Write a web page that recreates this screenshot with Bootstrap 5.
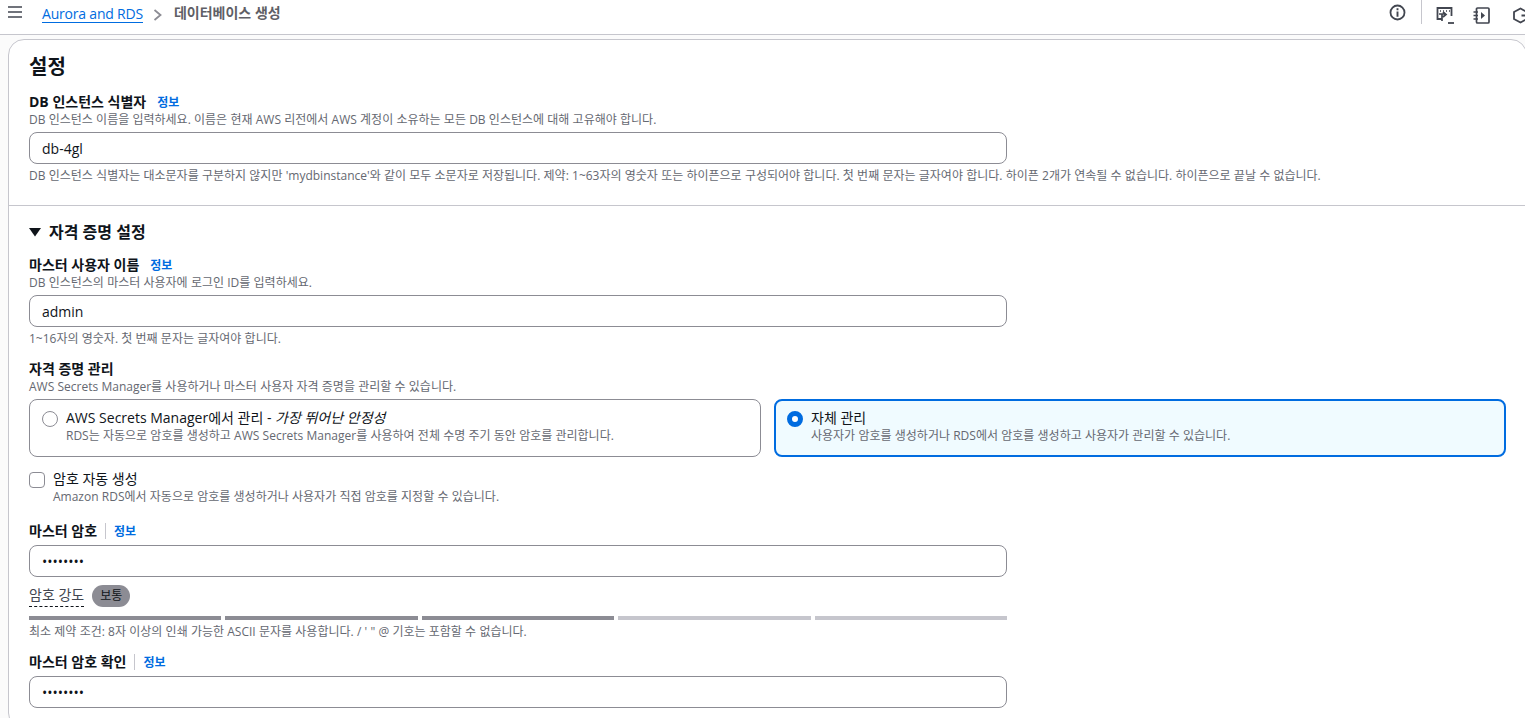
<!DOCTYPE html>
<html lang="ko">
<head>
<meta charset="utf-8">
<title>데이터베이스 생성</title>
<link rel="stylesheet" href="https://cdn.jsdelivr.net/npm/bootstrap@5.3.0/dist/css/bootstrap.min.css">
<style>
html,body{height:718px;overflow:hidden;background:#fbfbfb}
body{font-family:"Open Sans","Noto Sans CJK KR",sans-serif;font-size:14px;line-height:20px;color:#0f141a}
.topbar{height:35px;border-bottom:1px solid #c6c6cd;padding:0 0 0 8px;background:#fff}
.crumb-link{color:#006ce0;text-decoration:none;border-bottom:1px solid #006ce0;line-height:17px;margin:5px 0 0 20px;letter-spacing:-.2px}
.crumb-sep{margin:9px 12px 0 10px}
.crumb-now{font-weight:700;font-size:14px;color:#5f5f66;margin-top:3px;line-height:20px}
.top-icons{margin-left:auto;width:136px;overflow:hidden;height:26px;margin-top:-1px}
.top-div{width:1px;height:24px;background:#c6c6cd;margin:1px 14px 0 15px;flex:none}
.panel{margin:4px 0 0 8px;border:1px solid #c6c6cd;border-radius:16px;height:690px;padding:13px 0 0;width:1519px;background:#fff}
.sect{padding:0 20px}
.sec-title{font-size:20px;line-height:28px;font-weight:700;margin:0 0 11px}
.f-label{font-size:14px;font-weight:700;line-height:20px;height:20px}
.f-desc{font-size:12px;line-height:16px;color:#656871;word-spacing:.12px}
.f-info{color:#006ce0;font-size:12px;font-weight:700;text-decoration:none;margin-left:11px}
.info-div{border-left:1px solid #c6c6cd;padding-left:8px;margin-left:8px;height:16px;display:inline-block;line-height:16px}
.info-div a{color:#006ce0;font-size:12px;font-weight:700;text-decoration:none}
.f-input.form-control{width:978px;height:32px;border:1px solid #8c8c94;border-radius:8px;padding:4px 12px;font-size:14px;line-height:20px;color:#0f141a;font-family:inherit}
.sep-line{border-top:1px solid #c6c6cd;margin:0;opacity:1;width:100%}
.exp-title{font-size:16px;font-weight:700;line-height:20px;display:flex;align-items:center;gap:8px;margin:16px 0 13px}
.tile-row{display:flex;gap:13px;width:1477px}
.tile{flex:1 1 0;height:58px;border:1px solid #8c8c94;border-radius:8px;padding:5px 12px;display:flex;gap:8px;min-width:0}
.tile-on{border:2px solid #006ce0;background:#f0fbff;padding:4px 11px}
.radio-mark{flex:none;width:16px;height:16px;border-radius:50%;border:1px solid #8c8c94;margin-top:6px;background:#fff}
.radio-on{border:5px solid #006ce0}
.tile-title{line-height:20px;margin-top:3px}
.check-box{flex:none;width:16px;height:16px;border:1px solid #8c8c94;border-radius:4px;margin-top:0}
.strength{display:inline-block;border-bottom:1px dashed #0f141a;line-height:20px;height:22px;font-size:14px;color:#424650}
.pill{background:#8c8c94;color:#0f141a;border-radius:11px;font-size:12px;line-height:22px;height:22px;padding:0 8px;display:inline-block}
.meter{display:flex;gap:4px;width:978px;height:4px}
.meter i{flex:1 1 0;background:#8c8c94;display:block}
.meter i.off{background:#c6c6cd}
</style>
</head>
<body>
<div class="topbar d-flex align-items-start">
  <svg width="14" height="12" viewBox="0 0 14 12" style="margin-top:6px;flex:none"><path d="M0 1h14M0 6h14M0 11h14" stroke="#424650" stroke-width="1.6"/></svg>
  <a class="crumb-link" href="#">Aurora and RDS</a>
  <svg class="crumb-sep" width="9" height="12" viewBox="0 0 9 12"><path d="M1.500 1l6 5-6 5" fill="none" stroke="#8c8c94" stroke-width="1.8"/></svg>
  <span class="crumb-now">데이터베이스 생성</span>
  <div class="top-icons d-flex align-items-start">
    <svg width="17" height="17" viewBox="0 0 16 16" style="margin-top:5px;flex:none"><circle cx="8" cy="8" r="6.600" fill="none" stroke="#424650" stroke-width="1.700"/><path d="M8 7v5M8 4v1.800" stroke="#424650" stroke-width="1.800"/></svg>
    <span class="top-div"></span>
    <svg width="19" height="19" viewBox="0 0 19 19" style="margin-top:7px;flex:none"><path d="M6 13H1.500V2h14v8" fill="none" stroke="#424650" stroke-width="1.800"/><path d="M4 5h1M7 5h1M10 5h1M13 5h1" stroke="#424650" stroke-width="1.600"/><path d="M3 8h6M7 6l3 2.500L7 11M6 8v7" fill="none" stroke="#424650" stroke-width="1.700"/><path d="M12 17h6" stroke="#424650" stroke-width="1.800"/></svg>
    <svg width="17" height="17" viewBox="0 0 17 17" style="margin:8px 0 0 18px;flex:none"><rect x="3.500" y="1" width="12.500" height="15" rx="1" fill="none" stroke="#424650" stroke-width="1.700"/><path d="M0.500 5h4.500M0.500 8.500h4.500M0.500 12h4.500" stroke="#424650" stroke-width="1.500"/><path d="M8 5l4 3.500-4 3.500z" fill="#424650"/></svg>
    <svg width="17" height="17" viewBox="0 0 17 17" style="margin:8px 0 0 22px;flex:none"><path d="M14 4.500 8.500 1.500 2 5v7l6.500 3.500L15 12V8.500H9.500" fill="none" stroke="#424650" stroke-width="1.800"/></svg>
  </div>
</div>
<div class="panel">
  <div class="sect">
    <h2 class="sec-title">설정</h2>
    <div class="f-label">DB 인스턴스 식별자<a class="f-info" href="#">정보</a></div>
    <div class="f-desc">DB 인스턴스 이름을 입력하세요. 이름은 현재 AWS 리전에서 AWS 계정이 소유하는 모든 DB 인스턴스에 대해 고유해야 합니다.</div>
    <input class="form-control f-input" style="margin-top:4px" value="db-4gl">
    <div class="f-desc" style="margin-top:4px">DB 인스턴스 식별자는 대소문자를 구분하지 않지만 'mydbinstance'와 같이 모두 소문자로 저장됩니다. 제약: 1~63자의 영숫자 또는 하이픈으로 구성되어야 합니다. 첫 번째 문자는 글자여야 합니다. 하이픈 2개가 연속될 수 없습니다. 하이픈으로 끝날 수 없습니다.</div>
  </div>
  <hr class="sep-line" style="margin-top:21px">
  <div class="sect">
    <div class="exp-title"><svg width="12" height="10" viewBox="0 0 12 10"><path d="M0 1h12L6 9.500z" fill="#0f141a"/></svg>자격 증명 설정</div>
    <div class="f-label">마스터 사용자 이름<a class="f-info" href="#">정보</a></div>
    <div class="f-desc">DB 인스턴스의 마스터 사용자에 로그인 ID를 입력하세요.</div>
    <input class="form-control f-input" style="margin-top:4px" value="admin">
    <div class="f-desc" style="margin-top:4px">1~16자의 영숫자. 첫 번째 문자는 글자여야 합니다.</div>
    <div class="f-label" style="margin-top:12px">자격 증명 관리</div>
    <div class="f-desc">AWS Secrets Manager를 사용하거나 마스터 사용자 자격 증명을 관리할 수 있습니다.</div>
    <div class="tile-row" style="margin-top:4px">
      <div class="tile"><span class="radio-mark"></span><div><div class="tile-title">AWS Secrets Manager에서 관리 - <em>가장 뛰어난 안정성</em></div><div class="f-desc">RDS는 자동으로 암호를 생성하고 AWS Secrets Manager를 사용하여 전체 수명 주기 동안 암호를 관리합니다.</div></div></div>
      <div class="tile tile-on"><span class="radio-mark radio-on"></span><div><div class="tile-title">자체 관리</div><div class="f-desc">사용자가 암호를 생성하거나 RDS에서 암호를 생성하고 사용자가 관리할 수 있습니다.</div></div></div>
    </div>
    <div class="d-flex gap-2" style="margin-top:15px">
      <span class="check-box"></span>
      <div><div style="margin-top:-3px">암호 자동 생성</div><div class="f-desc">Amazon RDS에서 자동으로 암호를 생성하거나 사용자가 직접 암호를 지정할 수 있습니다.</div></div>
    </div>
    <div class="f-label" style="margin-top:16px">마스터 암호<span class="info-div"><a href="#">정보</a></span></div>
    <input class="form-control f-input" style="margin-top:4px" type="password" value="abcdefgh">
    <div class="d-flex align-items-start gap-2" style="margin-top:8px"><span class="strength">암호 강도</span><span class="pill">보통</span></div>
    <div class="meter" style="margin-top:9px"><i></i><i></i><i></i><i class="off"></i><i class="off"></i></div>
    <div class="f-desc" style="margin-top:4px">최소 제약 조건: 8자 이상의 인쇄 가능한 ASCII 문자를 사용합니다. / ' " @ 기호는 포함할 수 없습니다.</div>
    <div class="f-label" style="margin-top:12px">마스터 암호 확인<span class="info-div"><a href="#">정보</a></span></div>
    <input class="form-control f-input" style="margin-top:4px" type="password" value="abcdefgh">
  </div>
</div>
</body>
</html>
